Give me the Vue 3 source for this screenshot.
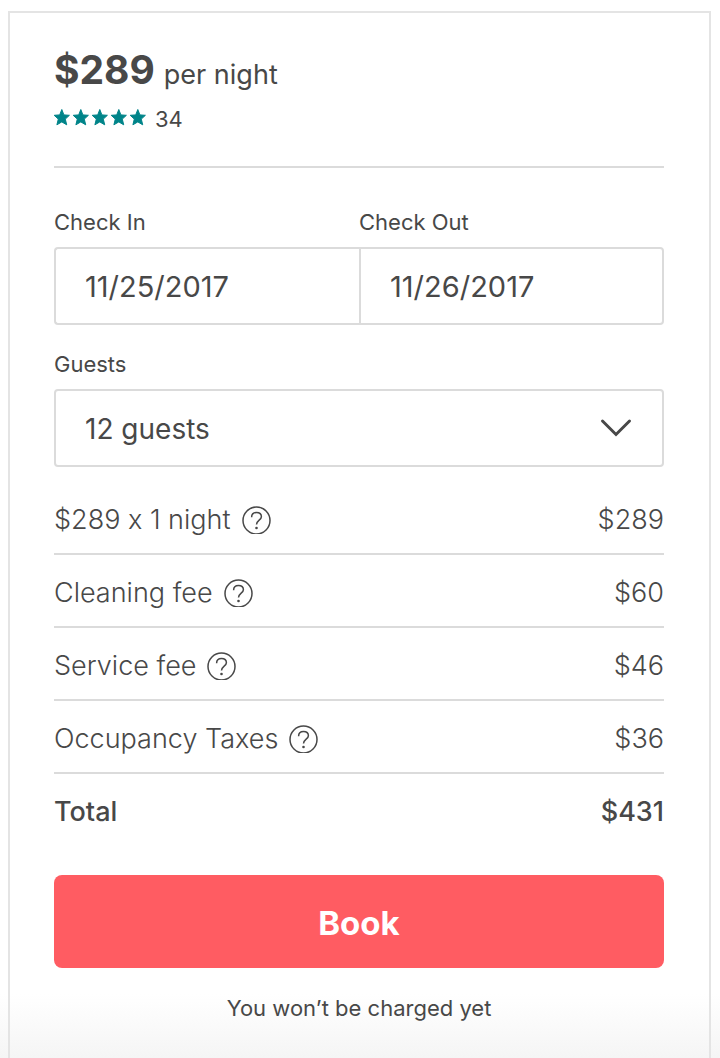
<script setup>
import { computed, ref } from 'vue';

const nightlyRate = 289;
const reviewCount = 34;

const checkIn = ref('11/25/2017');
const checkOut = ref('11/26/2017');
const guests = ref(12);

const fees = [
  { label: `$${nightlyRate} x 1 night`, amount: nightlyRate },
  { label: 'Cleaning fee', amount: 60 },
  { label: 'Service fee', amount: 46 },
  { label: 'Occupancy Taxes', amount: 36 },
];

const total = computed(() => fees.reduce((sum, fee) => sum + fee.amount, 0));
</script>

<template>
  <main class="page">
    <form class="card" @submit.prevent>
      <header class="summary">
        <div class="price">
          <strong>${{ nightlyRate }}</strong>
          <span>per night</span>
        </div>
        <div class="rating">
          <div class="stars" role="img" aria-label="5 out of 5 stars">
            <svg v-for="n in 5" :key="n" viewBox="0 0 17 17">
              <path
                d="M7.8 0.5 L9.9 5.9 L15.4 6.3 L11.3 10.1 L12.7 15.8 L7.8 12.9 L2.9 15.8 L4.3 10.1 L0.2 6.3 L5.7 5.9 Z"
              />
            </svg>
          </div>
          <span>{{ reviewCount }}</span>
        </div>
      </header>

      <div class="dates">
        <div class="field">
          <label for="check-in">Check In</label>
          <input id="check-in" v-model="checkIn" class="control start" type="text" />
        </div>
        <div class="field">
          <label for="check-out">Check Out</label>
          <input id="check-out" v-model="checkOut" class="control end" type="text" />
        </div>
      </div>

      <div class="field guests">
        <label for="guests">Guests</label>
        <div class="select">
          <select id="guests" v-model="guests" class="control">
            <option v-for="n in 16" :key="n" :value="n">
              {{ n }} {{ n === 1 ? 'guest' : 'guests' }}
            </option>
          </select>
          <svg class="chevron" viewBox="0 0 32 20" aria-hidden="true">
            <path d="M2.5 3 L16 16.5 L29.5 3" />
          </svg>
        </div>
      </div>

      <table class="fees">
        <tbody>
          <tr v-for="fee in fees" :key="fee.label">
            <th scope="row">
              <div class="fee-label">
                {{ fee.label }}
                <button class="help" type="button" :aria-label="`About ${fee.label}`">
                  <svg viewBox="0 0 29 28">
                    <circle cx="14.5" cy="14.5" r="13.5" />
                    <path
                      d="M9.6 11.2 C9.6 8.2 11.6 6.4 14.5 6.4 C17.4 6.4 19.4 8.2 19.4 10.7 C19.4 14.2 14.5 14.2 14.5 18.6"
                    />
                    <circle class="dot" cx="14.5" cy="22" r="1.3" />
                  </svg>
                </button>
              </div>
            </th>
            <td>${{ fee.amount }}</td>
          </tr>
        </tbody>
        <tfoot>
          <tr>
            <th scope="row">Total</th>
            <td>${{ total }}</td>
          </tr>
        </tfoot>
      </table>

      <button class="book" type="submit">Book</button>
      <p class="note">You won’t be charged yet</p>
    </form>
  </main>
</template>

<style>
body {
  margin: 0;
  background: #ffffff;
}
</style>

<style scoped>
* {
  box-sizing: border-box;
}

.page {
  display: flex;
  min-height: 100vh;
  padding: 11px 9px 0 8px;
  font-family: Inter, "Liberation Sans", sans-serif;
  /* keep the "x" between digits a plain letter */
  font-variant-ligatures: no-contextual;
  color: #484848;
  background: linear-gradient(to top, #f5f5f5, #ffffff 64px);
}

.card {
  flex: 1;
  min-width: 0;
  padding: 32px 45px 0 44px;
  border: 2px solid #e4e4e4;
  border-bottom: 0;
}

/* price and rating */
.summary {
  height: 123px;
  border-bottom: 2px solid #dbdbdb;
}

.price {
  display: flex;
  align-items: baseline;
  gap: 9px;
  line-height: 50px;
  font-size: 27px;
}

.price strong {
  font-size: 39px;
  font-weight: 700;
}

.rating {
  display: flex;
  align-items: center;
  gap: 8px;
  line-height: 38px;
  font-size: 22px;
}

.stars {
  display: flex;
  gap: 2px;
  padding-bottom: 4px;
}

.stars svg {
  width: 17px;
  height: 17px;
  fill: #008489;
  stroke: #008489;
  stroke-width: 1;
  stroke-linejoin: round;
  overflow: visible;
}

/* form fields */
.dates {
  display: grid;
  grid-template-columns: 1fr 1fr;
  margin-top: 36px;
}

.field label {
  display: block;
  height: 43px;
  line-height: 36px;
  font-size: 22px;
}

.guests {
  margin-top: 21px;
}

.control {
  display: block;
  width: 100%;
  height: 78px;
  margin: 0;
  padding: 2px 29px 0;
  border: 2px solid #dbdbdb;
  border-radius: 4px;
  background: #ffffff;
  color: inherit;
  font-family: inherit;
  font-size: 28px;
  appearance: none;
}

.start,
.end {
  padding-top: 0;
  font-size: 29px;
}

.start {
  border-right: 0;
  border-radius: 4px 0 0 4px;
}

.end {
  border-radius: 0 4px 4px 0;
}

.select {
  position: relative;
}

.chevron {
  position: absolute;
  top: 29px;
  right: 32px;
  width: 32px;
  height: 20px;
  fill: none;
  stroke: #484848;
  stroke-width: 3;
  stroke-linecap: round;
  pointer-events: none;
}

/* cost breakdown */
.fees {
  width: 100%;
  margin-top: 15px;
  border-spacing: 0;
  font-size: 27px;
  line-height: 36px;
}

.fees th,
.fees td {
  height: 73px;
  padding: 4px 0 0;
  font-weight: 300;
  text-align: left;
}

.fees td {
  text-align: right;
}

.fees tbody th,
.fees tbody td {
  border-bottom: 2px solid #dbdbdb;
}

.fees tfoot th,
.fees tfoot td {
  padding: 2px 0 0;
  font-weight: 500;
}

.fee-label {
  display: flex;
  align-items: center;
  gap: 11px;
}

.help {
  display: flex;
  padding: 0;
  border: 0;
  background: none;
  cursor: pointer;
}

.help svg {
  width: 29px;
  height: 28px;
  fill: none;
  stroke: #484848;
  stroke-width: 1.5;
}

.help .dot {
  fill: #484848;
  stroke: none;
}

.book {
  display: block;
  width: 100%;
  height: 93px;
  margin-top: 28px;
  padding: 2px 0 0;
  border: 0;
  border-radius: 8px;
  background: #ff5c62;
  color: #ffffff;
  font-family: inherit;
  font-size: 33px;
  font-weight: 700;
  cursor: pointer;
}

.note {
  margin: 22px 0 0;
  font-size: 22px;
  line-height: 36px;
  text-align: center;
}
</style>
